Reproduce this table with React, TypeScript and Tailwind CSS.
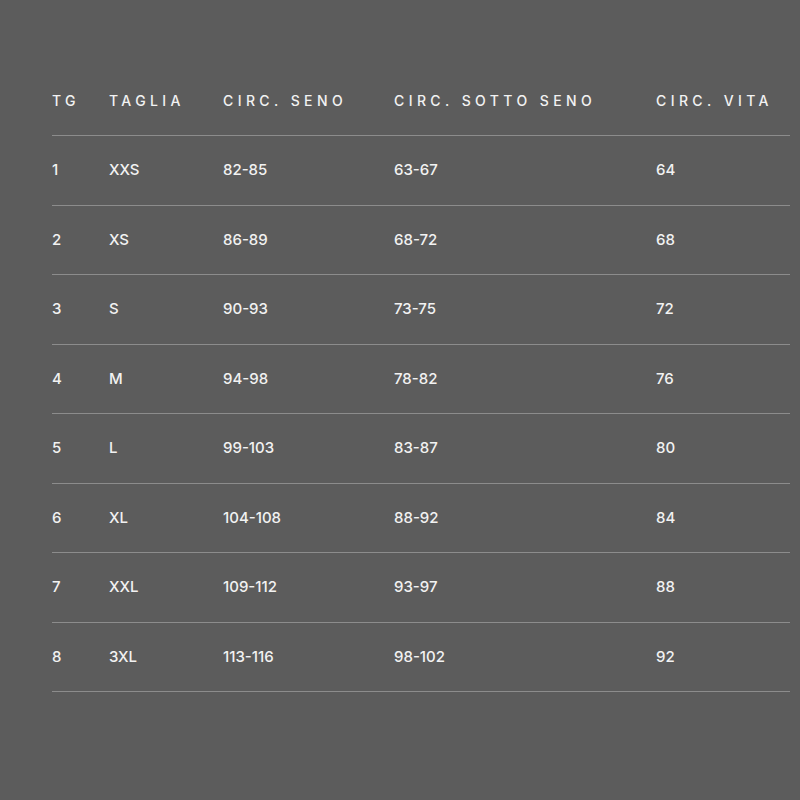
const HEAD = ["TG", "TAGLIA", "CIRC. SENO", "CIRC. SOTTO SENO", "CIRC. VITA"];

const ROWS = [
  ["1", "XXS", "82-85", "63-67", "64"],
  ["2", "XS", "86-89", "68-72", "68"],
  ["3", "S", "90-93", "73-75", "72"],
  ["4", "M", "94-98", "78-82", "76"],
  ["5", "L", "99-103", "83-87", "80"],
  ["6", "XL", "104-108", "88-92", "84"],
  ["7", "XXL", "109-112", "93-97", "88"],
  ["8", "3XL", "113-116", "98-102", "92"],
];

const COLS = "grid grid-cols-[57px_114px_171px_262px_134px] items-center";

export default function App() {
  return (
    <div
      className="min-h-[800px] w-[800px] bg-[#5c5c5c] pt-[66px] pl-[52px] text-[#f2f2f2]"
      style={{ fontFamily: 'Inter, "Liberation Sans", Arial, sans-serif' }}
    >
      <div className="w-[738px]">
        <div className={`${COLS} h-[70px] border-b border-[#8c8c8c] text-[14px] font-medium tracking-[4.4px]`}>
          {HEAD.map((h) => (
            <div key={h} className="whitespace-nowrap">{h}</div>
          ))}
        </div>
        {ROWS.map((r) => (
          <div key={r[0]} className={`${COLS} h-[69.5px] border-b border-[#8c8c8c] text-[15px] font-medium`}>
            {r.map((c, i) => (
              <div key={i}>{c}</div>
            ))}
          </div>
        ))}
      </div>
    </div>
  );
}
